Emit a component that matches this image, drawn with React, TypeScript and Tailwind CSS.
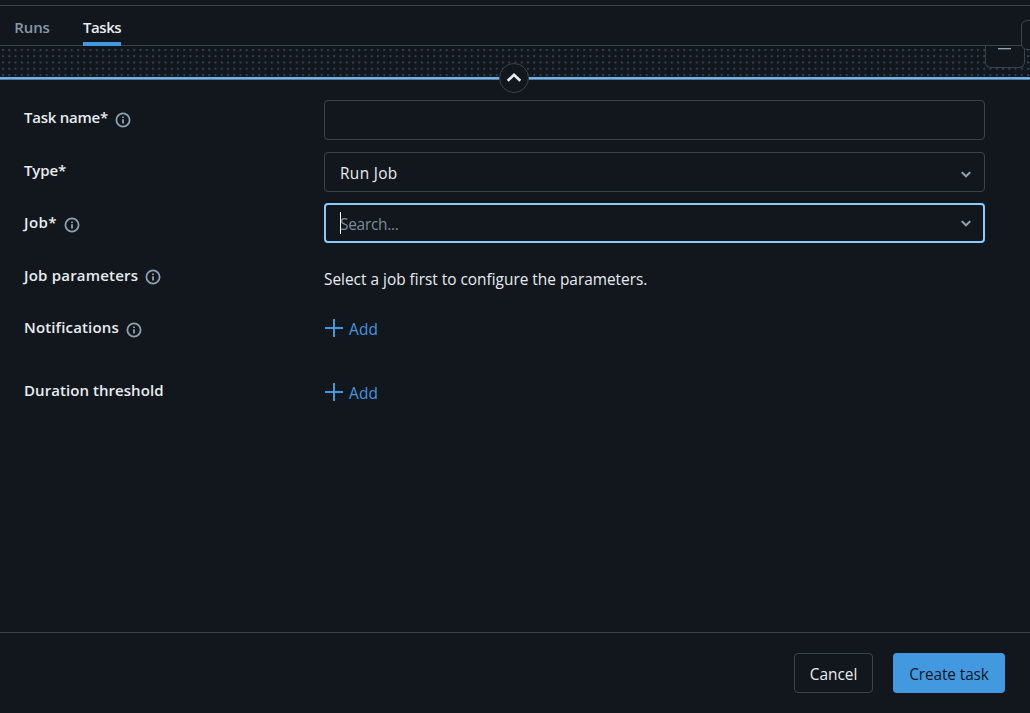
import type { ReactNode } from 'react';

function InfoIcon({ className }: { className: string }) {
  return (
    <svg className={`h-4 w-4 shrink-0 ${className}`} viewBox="0 0 16 16" fill="none">
      <circle cx="8" cy="8" r="6.6" stroke="#8fa0b1" strokeWidth="1.8" />
      <path d="M8 7.2v4.2M8 4.6v1.5" stroke="#8fa0b1" strokeWidth="1.8" />
    </svg>
  );
}

function ChevronDown() {
  return (
    <svg className="h-3 w-3" viewBox="0 0 12 12" fill="none">
      <path d="M1.7 4.1 6 8.3l4.3-4.2" stroke="#92a4b3" strokeWidth="2" />
    </svg>
  );
}

function AddButton() {
  return (
    <button className="flex items-center gap-[6px] text-[#4299e0]">
      <svg className="mb-[2px] h-5 w-[19px]" viewBox="0 0 19 20" fill="none">
        <path d="M1 10h18M10 1v18" stroke="#4299e0" strokeWidth="2" />
      </svg>
      <span className="pt-[2px] tracking-[0.2px]">Add</span>
    </button>
  );
}

interface FieldProps {
  label: string;
  infoClass?: string;
  className: string;
  labelClass: string;
  children: ReactNode;
}

function Field({ label, infoClass, className, labelClass, children }: FieldProps) {
  return (
    <div className={`flex items-start ${className}`}>
      <div className="flex h-9 w-[300px] shrink-0 items-start gap-[7px] text-[15px] font-semibold">
        <span className={`leading-6 whitespace-nowrap ${labelClass}`}>{label}</span>
        {infoClass && <InfoIcon className={infoClass} />}
      </div>
      <div className="flex h-10 w-[661px] items-center">{children}</div>
    </div>
  );
}

export default function App() {
  return (
    <div className="flex h-[713px] w-[1030px] flex-col overflow-hidden bg-[#11171d] pt-[5px] font-['Open_Sans','Noto_Sans',sans-serif] text-[15.4px] text-[#e8ecf0]">
      <nav className="flex h-[41px] shrink-0 gap-[33px] border-y border-[#37444f] pl-[14px] text-[15px] font-semibold">
        <button className="h-10 w-9 pb-[2px] pt-[5px] tracking-[-0.1px] text-[#8798a6]">Runs</button>
        <button className="h-10 w-[38px] border-b-4 border-[#4299e0] pt-[6px] tracking-[-0.45px]">Tasks</button>
      </nav>

      <section className="relative h-[34px] shrink-0">
        <svg className="h-[31px] w-full" aria-hidden="true">
          <defs>
            <pattern id="dots" x="2" y="3" width="6.25" height="6.25" patternUnits="userSpaceOnUse">
              <rect width="2" height="2" fill="#36414b" />
            </pattern>
          </defs>
          <rect width="1030" height="31" fill="url(#dots)" />
        </svg>
        <div className="h-[3px] border-b border-[#4d7ca6] bg-[#75b2e6]" />
        <div className="absolute top-0 left-[985px] h-[22px] w-10 rounded-b-md border border-t-0 border-[#37444f] bg-[#11171d]">
          <div className="ml-3 mt-[2px] h-[2px] w-[13px] border-b border-[#3d4955] bg-[#92a4b3]" />
        </div>
        <div className="absolute -top-[26px] left-[1021px] h-[30px] w-10 rounded-md border border-[#37444f] bg-[#11171d]" />
        <button className="absolute top-[17px] left-[499px] flex h-[30px] w-[30px] items-center justify-center rounded-full border border-[#37444f] bg-[#11171d]">
          <svg className="h-4 w-4" viewBox="0 0 16 16" fill="none">
            <path d="m1.7 10.8 6.3-6 6.3 6" stroke="#e8ecf0" strokeWidth="2.7" />
          </svg>
        </button>
      </section>

      <main className="flex grow flex-col pt-5 pl-6">
        <Field label="Task name*" infoClass="mt-3" className="h-[52px]" labelClass="mt-[5px] w-[84px] tracking-[-0.25px]">
          <input aria-label="Task name" className="h-10 w-full rounded border border-[#37444f] bg-transparent px-[15px] outline-none" />
        </Field>
        <Field label="Type*" className="h-[51px]" labelClass="mt-[6px] tracking-[-0.15px]">
          <button className="flex h-10 w-full items-center justify-between rounded border border-[#37444f] pt-1 pr-3 pl-[15px]">
            <span className="tracking-[0.35px]">Run Job</span>
            <ChevronDown />
          </button>
        </Field>
        <Field label="Job*" infoClass="mt-[14px]" className="h-[53px]" labelClass="mt-[7px] w-[33px] tracking-[0.4px]">
          <div className="flex h-10 w-full items-center justify-between rounded border-2 border-[#8acaff] pr-[11px] pl-[14px]">
            <span className="flex items-center text-[#7c8b98]">
              <span className="-mr-px h-[22px] w-px bg-white" />
              <span className="pt-1 tracking-[-0.25px]">Search...</span>
            </span>
            <ChevronDown />
          </div>
        </Field>
        <Field label="Job parameters" infoClass="mt-[13px]" className="h-[53px]" labelClass="mt-[7px] w-[114px] tracking-[0.2px]">
          <span className="pt-[7px]">Select a job first to configure the parameters.</span>
        </Field>
        <Field label="Notifications" infoClass="mt-[13px]" className="h-[64px]" labelClass="mt-[6px] w-[95px] tracking-[0.15px]">
          <AddButton />
        </Field>
        <Field label="Duration threshold" className="h-10" labelClass="mt-[5px] tracking-[0.06px]">
          <AddButton />
        </Field>
      </main>

      <footer className="flex h-[81px] shrink-0 items-start justify-end gap-5 border-t border-[#37444f] pt-5 pr-[25px]">
        <button className="h-10 w-[79px] rounded border border-[#37444f] pt-1">Cancel</button>
        <button className="h-10 w-28 rounded bg-[#4299e0] pt-1 tracking-[-0.1px] text-[#11171d]">Create task</button>
      </footer>
    </div>
  );
}
